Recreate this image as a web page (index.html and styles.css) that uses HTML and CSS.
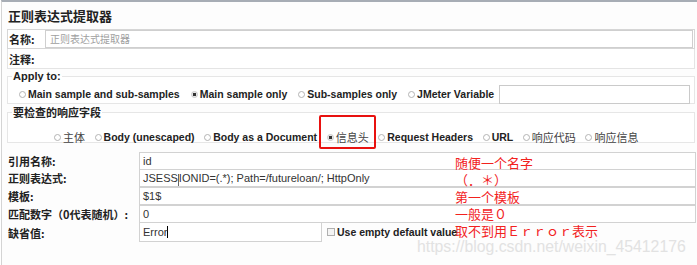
FILE: index.html
```html
<!DOCTYPE html>
<html>
<head>
<meta charset="utf-8">
<link rel="stylesheet" href="styles.css">
</head>
<body>
<div class="panel">
  <div class="title">正则表达式提取器</div>
  <div class="namerow">
    <span class="lbl namelbl">名称:</span>
    <div class="nameinput">正则表达式提取器</div>
  </div>
  <div class="commentrow"><span class="lbl namelbl">注释:</span></div>

  <fieldset class="fs fs1">
    <legend class="legend en">Apply to:</legend>
    <div class="radios r1">
      <span class="opt"><i class="radio"></i>Main sample and sub-samples</span>
      <span class="opt"><i class="radio on"></i>Main sample only</span>
      <span class="opt"><i class="radio"></i>Sub-samples only</span>
      <span class="opt"><i class="radio"></i>JMeter Variable</span>
      <div class="varinput"></div>
    </div>
  </fieldset>

  <fieldset class="fs fs2">
    <legend class="legend cn">要检查的响应字段</legend>
    <div class="radios r2">
      <span class="opt cnopt"><i class="radio"></i>主体</span>
      <span class="opt"><i class="radio"></i>Body (unescaped)</span>
      <span class="opt"><i class="radio"></i>Body as a Document</span>
      <span class="opt cnopt sel"><i class="radio on"></i>信息头</span>
      <span class="opt"><i class="radio"></i>Request Headers</span>
      <span class="opt"><i class="radio"></i>URL</span>
      <span class="opt cnopt"><i class="radio"></i>响应代码</span>
      <span class="opt cnopt"><i class="radio"></i>响应信息</span>
    </div>
  </fieldset>

  <div class="form">
    <span class="lbl">引用名称:</span><div class="field">id</div>
    <span class="lbl">正则表达式:</span><div class="field">JSESS<span class="ibeam"></span>IONID=(.*); Path=/futureloan/; HttpOnly</div>
    <span class="lbl">模板:</span><div class="field">$1$</div>
    <span class="lbl">匹配数字（0代表随机）:</span><div class="field">0</div>
    <span class="lbl">缺省值:</span>
    <div class="lastrow">
      <div class="field deffield">Erro<span class="caret">r</span></div>
      <span class="chk"><i class="box"></i>Use empty default value</span>
    </div>
  </div>

  <div class="notes">
    <div>随便一个名字</div>
    <div>（．＊）</div>
    <div>第一个模板</div>
    <div>一般是０</div>
    <div>取不到用Ｅｒｒｏｒ表示</div>
  </div>
  <div class="watermark">https://blog.csdn.net/weixin_45412176</div>
</div>
</body>
</html>
```

FILE: styles.css
```css
html, body {
  margin: 0;
  padding: 0;
  background: #fff;
}
body {
  width: 697px;
  height: 265px;
  overflow: hidden;
  font-family: "Liberation Sans", Arial, "Noto Sans CJK SC", sans-serif;
}
.panel {
  position: relative;
  margin-left: 1px;
  width: 688px;
  height: 263px;
  border-top: 2px solid #a7adb5;
  border-left: 1px solid #d4d4d4;
  border-right: 1px solid #c6c6c6;
  padding: 0 4px 0 5px;
  box-sizing: content-box;
  background: #fdfdfd;
}
.title {
  height: 27px;
  line-height: 28px;
  padding-left: 1px;
  font-family: "Noto Sans CJK SC", sans-serif;
  font-weight: bold;
  font-size: 13px;
  color: #222;
}
.lbl {
  font-family: "Noto Sans CJK SC", sans-serif;
  font-weight: bold;
  font-size: 11px;
  color: #222;
  white-space: nowrap;
}
.namerow {
  display: flex;
  align-items: center;
  height: 18px;
  border: 1px solid #d6d6d6;
  background: #fff;
}
.namelbl {
  width: 36px;
  padding-left: 1px;
  flex: none;
}
.nameinput {
  flex: 1;
  height: 16px;
  line-height: 16px;
  border: 1px solid #cfcfcf;
  margin-right: 1px;
  padding-left: 4px;
  font-family: "Noto Sans CJK SC", sans-serif;
  font-size: 10px;
  color: #a0a0a0;
}
.commentrow {
  display: flex;
  align-items: center;
  height: 19px;
  border: 1px solid #e4e4e4;
  border-top: none;
  background: #fff;
}
.fs {
  margin: 0;
  padding: 0 4px 0 4px;
  border: 1px solid #e6e6e6;
  background: #fff;
}
.fs1 {
  margin-top: 1px;
  height: 32px;
}
.fs2 {
  margin-top: 0;
  height: 37px;
}
.legend {
  padding: 0 1px;
  margin-left: 0;
  font-weight: bold;
  color: #222;
}
.legend.en {
  font-size: 11px;
}
.legend.cn {
  font-family: "Noto Sans CJK SC", sans-serif;
  font-size: 11px;
}
.radios {
  display: flex;
  align-items: center;
  font-weight: bold;
  font-size: 10.5px;
  color: #222;
  white-space: nowrap;
}
.r1 {
  height: 24px;
  padding-left: 7px;
  gap: 11px;
}
.r2 {
  height: 34px;
  padding-left: 42px;
  gap: 9.6px;
}
.opt {
  display: flex;
  align-items: center;
  gap: 2px;
  position: relative;
}
.cnopt {
  font-family: "Noto Sans CJK SC", sans-serif;
  font-weight: normal;
  font-size: 11px;
  color: #444;
}
.radio {
  display: inline-block;
  width: 5px;
  height: 5px;
  border: 1px solid #b4b4b4;
  border-radius: 50%;
  background: #fff;
}
.radio.on {
  background: radial-gradient(circle, #333 0 1.6px, #e8e8e8 2px);
  border-color: #c8c8c8;
}
.sel::after {
  content: "";
  position: absolute;
  left: -8px;
  top: -14px;
  width: 53px;
  height: 30px;
  border: 2px solid #e8110f;
  border-radius: 2px;
}
.varinput {
  flex: 1;
  height: 17px;
  margin-left: -6px;
  border: 1px solid #cacaca;
  background: #fff;
}
.form {
  display: grid;
  grid-template-columns: 131px 1fr;
  grid-template-rows: repeat(4, 17.6px) 22px;
  margin-top: 9px;
  align-items: center;
  padding-left: 1px;
}
.field {
  height: 16px;
  line-height: 16px;
  border: 1px solid #d2d2d2;
  background: #fff;
  padding-left: 3px;
  font-size: 11px;
  color: #333;
  white-space: nowrap;
  margin-right: -1px;
}
.lastrow {
  display: flex;
  align-items: center;
  height: 20px;
  align-self: start;
}
.deffield {
  width: 178px;
  height: 18px;
  line-height: 18px;
  margin-right: 0;
}
.caret {
  border-right: 1px solid #000;
}
.ibeam {
  display: inline-block;
  width: 1px;
  height: 12px;
  background: #666;
  vertical-align: -4px;
}
.chk {
  display: flex;
  align-items: center;
  gap: 2px;
  margin-left: 5px;
  font-weight: bold;
  font-size: 10.5px;
  color: #222;
  white-space: nowrap;
}
.box {
  display: inline-block;
  width: 6px;
  height: 6px;
  border: 1px solid #b0b0b0;
  background: #f4f4f4;
}
.notes {
  position: absolute;
  left: 453px;
  top: 152px;
  font-family: "Noto Sans CJK SC", sans-serif;
  font-size: 13px;
  line-height: 17px;
  color: #f2221e;
  white-space: nowrap;
}
.watermark {
  position: absolute;
  left: 415px;
  top: 236px;
  font-size: 15.8px;
  color: #e2e2e2;
  white-space: nowrap;
}
```
